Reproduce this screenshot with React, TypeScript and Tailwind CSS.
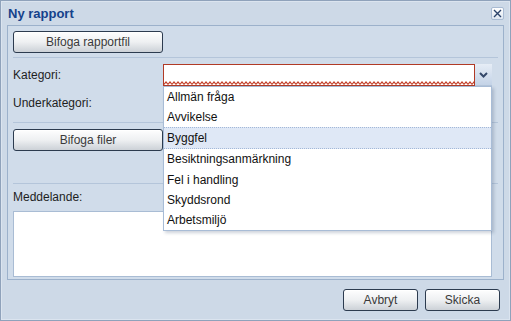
import React from "react";

const items = [
  "Allmän fråga",
  "Avvikelse",
  "Byggfel",
  "Besiktningsanmärkning",
  "Fel i handling",
  "Skyddsrond",
  "Arbetsmiljö",
];

const btn =
  "h-[22px] rounded-[3px] border border-[#2c3b4f] bg-gradient-to-b from-[#fefefe] via-[#eef0f2] to-[#ccd1d7] text-[12px] text-[#3a3a3a] flex items-center justify-center shadow-[inset_0_1px_0_#ffffff]";

function Separator({ className = "" }: { className?: string }) {
  return <div className={`h-px bg-[#b4c5da] ${className}`} />;
}

function InvalidLine() {
  return (
    <svg className="absolute left-0 bottom-0" width="100%" height="4">
      <defs>
        <pattern id="zig" width="4" height="4" patternUnits="userSpaceOnUse">
          <path d="M0 3.5 L2 1 L4 3.5" fill="none" stroke="#c23b24" strokeWidth="1.2" />
        </pattern>
      </defs>
      <rect x="0" y="0" width="100%" height="4" fill="url(#zig)" />
    </svg>
  );
}

function Trigger() {
  return (
    <div className="w-[17px] h-[22px] bg-gradient-to-b from-[#e6edf6] to-[#c4d3e7] border-b border-[#b6c6db] flex items-center justify-center">
      <svg width="9" height="6" viewBox="0 0 9 6">
        <path d="M1 1 L4.5 4.5 L8 1" fill="none" stroke="#34486a" strokeWidth="2" />
      </svg>
    </div>
  );
}

export default function App() {
  return (
    <div className="w-[511px] h-[321px] bg-[#cdd9e7] border border-[#8fa2bb] shadow-[inset_0_0_0_1px_#dbe4ef] font-['Liberation_Sans',Arial,sans-serif] text-[12px] text-[#1e1e1e] flex flex-col">
      {/* title bar */}
      <div className="h-[24px] shrink-0 flex items-center justify-between pl-[7px] pr-[6px]">
        <span className="text-[13px] font-bold text-[#15428b] leading-none">Ny rapport</span>
        <div className="w-[13px] h-[13px] rounded-[2px] border border-[#a9bbd3] bg-gradient-to-b from-[#ffffff] to-[#dde6f1] flex items-center justify-center">
          <svg width="9" height="9" viewBox="0 0 9 9">
            <path d="M1 1 L8 8 M8 1 L1 8" stroke="#2b426a" strokeWidth="1.4" />
          </svg>
        </div>
      </div>

      {/* body panel */}
      <div className="mx-[6px] h-[255px] shrink-0 border border-[#9cb1cb] bg-[#d0dcea] pl-[5px] pr-[11px] pt-[5px] flex flex-col">
        <button className={`${btn} w-[150px]`}>Bifoga rapportfil</button>
        <Separator className="mt-[4px] -mr-[6px]" />

        {/* Kategori */}
        <div className="mt-[6px] h-[22px] flex items-center">
          <span className="w-[150px] shrink-0">Kategori:</span>
          <div className="relative flex z-10">
            <div className="relative w-[312px] h-[22px] bg-white border border-[#b13a26]">
              <InvalidLine />
            </div>
            <Trigger />
            {/* dropdown list */}
            <div className="absolute top-full left-0 w-[329px] h-[145px] bg-white border border-[#a8bcd6] shadow-[2px_2px_3px_rgba(60,80,110,0.25)] flex flex-col">
              {items.map((it) => (
                <div
                  key={it}
                  className={`flex-1 flex items-center pl-[3px] text-[12px] text-[#111] ${
                    it === "Byggfel" ? "bg-[#dfe8f6] border-y border-dotted border-[#a3b8d8]" : ""
                  }`}
                >
                  {it}
                </div>
              ))}
            </div>
          </div>
        </div>

        {/* Underkategori */}
        <div className="mt-[6px] h-[22px] flex items-center">
          <span className="w-[150px] shrink-0">Underkategori:</span>
          <div className="flex">
            <div className="w-[312px] h-[22px] bg-white border border-[#b5c7dc]" />
            <Trigger />
          </div>
        </div>
        <Separator className="mt-[8px] -mr-[6px]" />

        <button className={`${btn} w-[150px] mt-[6px]`}>Bifoga filer</button>
        <div className="h-[32px]" />
        <Separator className="-mr-[6px]" />

        <div className="mt-[6px] h-[14px] flex items-center">Meddelande:</div>
        <div className="mt-[7px] h-[66px] bg-white border border-[#a9bcd4]" />
      </div>

      {/* footer */}
      <div className="flex justify-end gap-[7px] pr-[10px] pt-[9px]">
        <button className={`${btn} w-[75px]`}>Avbryt</button>
        <button className={`${btn} w-[75px]`}>Skicka</button>
      </div>
    </div>
  );
}
